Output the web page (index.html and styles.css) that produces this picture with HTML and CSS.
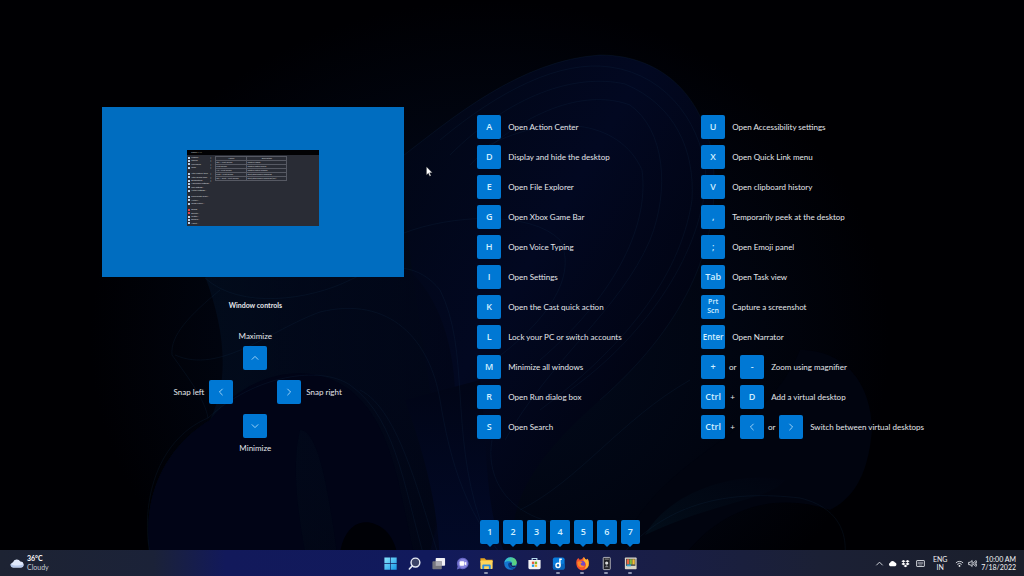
FILE: index.html
```html
<!DOCTYPE html>
<html lang="en">
<head>
<meta charset="utf-8">
<title>Windows key shortcuts</title>
<link rel="stylesheet" href="styles.css">
</head>
<body>
<svg class="wallpaper" viewBox="0 0 1024 576" preserveAspectRatio="xMidYMid slice" aria-hidden="true">
  <defs>
    <radialGradient id="glow" cx="50%" cy="50%" r="50%"><stop offset="0" stop-color="#020b1e"/><stop offset=".6" stop-color="#010511"/><stop offset="1" stop-color="#000003"/></radialGradient>
    <linearGradient id="petal" x1="0" y1="0" x2="1" y2="1"><stop offset="0" stop-color="#010614"/><stop offset=".4" stop-color="#020821"/><stop offset="1" stop-color="#000005"/></linearGradient>
    <linearGradient id="arm" x1="0" y1="0" x2="1" y2="0"><stop offset="0" stop-color="#031224"/><stop offset=".5" stop-color="#02091c"/><stop offset="1" stop-color="#010516"/></linearGradient>
    <linearGradient id="blue" x1="0" y1="0" x2="0" y2="1"><stop offset="0" stop-color="#010516"/><stop offset="1" stop-color="#020a2a"/></linearGradient>
    <linearGradient id="swoosh" x1="0" y1="1" x2="1" y2="0"><stop offset="0" stop-color="#020d19"/><stop offset="1" stop-color="#010410"/></linearGradient>
  </defs>
  <rect width="1024" height="576" fill="#000003"/>
  <ellipse cx="490" cy="340" rx="400" ry="340" fill="url(#glow)"/>
  <path d="M404 155C450 120 520 60 600 55C665 55 705 100 713 160C722 250 680 330 600 400C520 470 500 520 520 576H420C470 480 400 300 404 155Z" fill="url(#petal)"/>
  <path d="M205 276C225 330 230 380 210 420C160 450 135 510 155 576H420C460 480 480 330 404 265Z" fill="url(#arm)" opacity=".7"/>
  <path d="M210 420C250 370 310 360 350 390C400 430 400 510 420 576H340C330 500 320 430 300 430C290 470 300 530 310 576H155C135 510 160 450 210 420Z" fill="#010416"/>
  <path d="M405 400C430 470 440 520 440 576H520C480 530 490 450 480 380Z" fill="url(#blue)"/>
  <path d="M800 350C850 350 872 390 872 430C868 480 850 500 830 510C770 490 710 510 670 576H610C620 540 640 510 660 490C710 440 770 420 800 350Z" fill="#01040f"/>
  <path d="M645 535C670 490 740 470 785 480C770 500 720 500 645 535Z" fill="url(#swoosh)"/>
  <path d="M340 576C335 530 360 510 385 530C400 545 398 565 400 576Z" fill="#000106"/>
  <g class="wallpaper-folds">
    <path d="M404 155C450 120 520 60 600 55C665 55 705 100 713 160C722 250 680 330 600 400"/>
    <path d="M440 140C500 90 560 60 610 67C670 75 705 130 706 180C700 260 640 340 570 390"/>
    <path d="M450 155C510 95 575 73 625 84C675 105 695 150 692 200C680 280 620 350 540 410"/>
    <path d="M470 165C530 105 590 90 630 105C665 130 670 190 650 240C620 310 550 360 505 440"/>
    <path d="M480 150C550 110 620 120 642 170C650 230 610 300 540 360"/>
    <path d="M404 233C450 215 530 210 560 240C580 280 540 330 480 370"/>
    <path d="M205 278C240 310 310 300 350 280S420 265 440 290C470 350 450 430 480 520"/>
    <path d="M175 355C220 375 270 330 320 312C390 295 430 340 440 400C450 460 465 520 520 576"/>
    <path d="M220 290C190 315 170 335 172 355C190 380 205 400 208 418"/>
    <path d="M208 418C255 375 320 365 350 385C400 420 405 500 430 576"/>
    <path d="M208 418C155 440 135 510 155 576"/>
    <path d="M360 390C400 410 420 500 445 576"/>
    <path d="M492 440C485 480 510 520 570 525"/>
    <path d="M520 510C580 480 620 420 690 380"/>
    <path d="M610 570C660 500 730 490 800 498C850 510 850 550 840 576"/>
  </g>
</svg>

<main class="overlay">
  <section class="windows">
    <div class="preview">
      <div class="thumb">
        <div class="thumb-title">ShareX 14.1</div>
        <div class="thumb-body">
          <div class="thumb-menu">
            <ul class="four sub"><li>Capture</li><li>Upload</li><li>Workflows</li><li>Tools</li></ul>
            <ul class="six sub"><li>After capture tasks</li><li>After upload tasks</li><li>Destinations</li><li class="plain">Application settings...</li><li class="plain">Task settings...</li><li class="plain">Hotkey settings...</li></ul>
            <ul class="three"><li>Screenshots folder...</li><li>History...</li><li>Image history...</li></ul>
            <ul class="five"><li class="red">Debug</li><li class="red">Donate...</li><li>Twitter...</li><li>Discord...</li><li>About...</li></ul>
          </div>
          <table class="thumb-table">
            <tr><th>Hotkey</th><th>Description</th></tr>
            <tr><td>Ctrl + Print Screen</td><td>Capture region</td></tr>
            <tr><td>Print Screen</td><td>Capture entire screen</td></tr>
            <tr><td>Alt + Print Screen</td><td>Capture active window</td></tr>
            <tr><td>Shift + Print Screen</td><td>Start/Stop screen recording</td></tr>
            <tr><td>Ctrl + Shift + Print Screen</td><td>Start/Stop screen recording (GIF)</td></tr>
          </table>
        </div>
      </div>
    </div>
    <h2 class="controls-title">Window controls</h2>
    <div class="pad">
      <span class="pad-max">Maximize</span>
      <kbd class="key pad-up"><svg class="chev" viewBox="0 0 10 10"><path d="M1 7l4-4 4 4"/></svg></kbd>
      <span class="pad-snapl">Snap left</span>
      <kbd class="key pad-left"><svg class="chev" viewBox="0 0 10 10"><path d="M7 1L3 5l4 4"/></svg></kbd>
      <kbd class="key pad-right"><svg class="chev" viewBox="0 0 10 10"><path d="M3 1l4 4-4 4"/></svg></kbd>
      <span class="pad-snapr">Snap right</span>
      <kbd class="key pad-down"><svg class="chev" viewBox="0 0 10 10"><path d="M1 3l4 4 4-4"/></svg></kbd>
      <span class="pad-min">Minimize</span>
    </div>
  </section>

  <ul class="shortcuts">
    <li><kbd class="key">A</kbd><span class="what">Open Action Center</span></li>
    <li><kbd class="key">D</kbd><span class="what">Display and hide the desktop</span></li>
    <li><kbd class="key">E</kbd><span class="what">Open File Explorer</span></li>
    <li><kbd class="key">G</kbd><span class="what">Open Xbox Game Bar</span></li>
    <li><kbd class="key">H</kbd><span class="what">Open Voice Typing</span></li>
    <li><kbd class="key">I</kbd><span class="what">Open Settings</span></li>
    <li><kbd class="key">K</kbd><span class="what">Open the Cast quick action</span></li>
    <li><kbd class="key">L</kbd><span class="what">Lock your PC or switch accounts</span></li>
    <li><kbd class="key">M</kbd><span class="what">Minimize all windows</span></li>
    <li><kbd class="key">R</kbd><span class="what">Open Run dialog box</span></li>
    <li><kbd class="key">S</kbd><span class="what">Open Search</span></li>
  </ul>

  <ul class="shortcuts">
    <li><kbd class="key">U</kbd><span class="what">Open Accessibility settings</span></li>
    <li><kbd class="key">X</kbd><span class="what">Open Quick Link menu</span></li>
    <li><kbd class="key">V</kbd><span class="what">Open clipboard history</span></li>
    <li><kbd class="key">,</kbd><span class="what">Temporarily peek at the desktop</span></li>
    <li><kbd class="key">;</kbd><span class="what">Open Emoji panel</span></li>
    <li><kbd class="key">Tab</kbd><span class="what">Open Task view</span></li>
    <li><kbd class="key stacked">Prt<br>Scn</kbd><span class="what">Capture a screenshot</span></li>
    <li><kbd class="key small">Enter</kbd><span class="what">Open Narrator</span></li>
    <li><kbd class="key">+</kbd><span class="join">or</span><kbd class="key">-</kbd><span class="what">Zoom using magnifier</span></li>
    <li><kbd class="key">Ctrl</kbd><span class="join">+</span><kbd class="key">D</kbd><span class="what">Add a virtual desktop</span></li>
    <li><kbd class="key">Ctrl</kbd><span class="join">+</span><kbd class="key"><svg class="chev" viewBox="0 0 10 10"><path d="M7 1L3 5l4 4"/></svg></kbd><span class="join">or</span><kbd class="key"><svg class="chev" viewBox="0 0 10 10"><path d="M3 1l4 4-4 4"/></svg></kbd><span class="what">Switch between virtual desktops</span></li>
  </ul>
</main>

<div class="badges">
  <kbd class="badge">1</kbd><kbd class="badge">2</kbd><kbd class="badge">3</kbd><kbd class="badge">4</kbd><kbd class="badge">5</kbd><kbd class="badge">6</kbd><kbd class="badge">7</kbd>
</div>

<footer class="taskbar">
  <button class="weather">
    <svg class="cloud" viewBox="0 0 14 10"><path d="M3 9.500a2.700 2.700 0 0 1 0-5.300A4 4 0 0 1 10.300 3.500 3 3 0 0 1 11 9.500Z" fill="#dfe9fb"/><path d="M3 9.500a2.700 2.700 0 0 1-2.300-3.800C3 8 9 8 13.300 6.500A3 3 0 0 1 11 9.500Z" fill="#b5c8ea"/></svg>
    <span class="weather-text"><b>36°C</b><span>Cloudy</span></span>
  </button>

  <nav class="apps" aria-label="Taskbar">
    <button class="app" aria-label="Start"><svg viewBox="0 0 16 16"><defs><linearGradient id="win" x1="0" y1="0" x2="1" y2="1"><stop offset="0" stop-color="#8ae6fc"/><stop offset="1" stop-color="#1597e8"/></linearGradient></defs><path d="M1.500 1.500h6.200v6.200H1.500zM8.400 1.500h6.200v6.200H8.400zM1.500 8.400h6.200v6.200H1.500zM8.400 8.400h6.200v6.200H8.400z" fill="url(#win)"/></svg></button>
    <button class="app" aria-label="Search"><svg viewBox="0 0 16 16"><circle cx="9" cy="7" r="4.700" fill="#3c4468" stroke="#e6ebf5" stroke-width="1.500"/><path d="M5.600 10.500L2.500 13.800" stroke="#e6ebf5" stroke-width="1.700" stroke-linecap="round"/></svg></button>
    <button class="app" aria-label="Task view"><svg viewBox="0 0 16 16"><rect x="5" y="2" width="10" height="8.500" rx=".8" fill="#f1f1f6"/><rect x="1.500" y="5.500" width="10" height="8.500" rx=".8" fill="#77777f"/><path d="M5 5.500h6.500v5H5z" fill="#aaaab2"/></svg></button>
    <button class="app" aria-label="Chat"><svg viewBox="0 0 16 16"><path d="M8.200 1.800a6.200 6.200 0 1 1-3 11.600L2 14.300l.8-3.300A6.200 6.200 0 0 1 8.200 1.800Z" fill="#6767c4"/><circle cx="8.500" cy="8" r="4.800" fill="#8987df"/><rect x="5" y="5.700" width="4.800" height="4.600" rx="1" fill="#fff"/><path d="M10.200 7.300L12 6v4l-1.800-1.300z" fill="#fff"/></svg></button>
    <button class="app open" aria-label="File Explorer"><svg viewBox="0 0 16 16"><path d="M1.500 2.500h4.500l1.500 1.500h7v3h-13z" fill="#e8a41c"/><rect x="1.500" y="4.800" width="13" height="9" rx=".8" fill="#ffd45a"/><path d="M3.500 13.800V10a1 1 0 0 1 1-1h7a1 1 0 0 1 1 1v3.800h-2V11h-5v2.800z" fill="#2f8fe0"/></svg></button>
    <button class="app" aria-label="Edge"><svg viewBox="0 0 16 16"><defs><linearGradient id="edge" x1="0" y1="0" x2="1" y2="0"><stop offset="0" stop-color="#2cb5e9"/><stop offset="1" stop-color="#64d86b"/></linearGradient></defs><circle cx="8" cy="8" r="6.700" fill="#1576cf"/><path d="M1.300 7.500C2 3.500 5 1.300 8.200 1.300c4 0 6.500 3 6.500 5.800 0 2-1.500 3.400-3.500 3.400-1.500 0-2.300-.6-2-1.200.8-1.300.3-3.300-2-3.600C4.500 5.300 2 6 1.300 7.500Z" fill="url(#edge)"/><path d="M5.500 8.500c-.3 3 2 5.300 5.200 5.200 1.200-.1 2-.7 2.800-1.500-2 .6-5 .2-6-2.200-.3-.9-.1-2 .3-2.800-1-.1-2.100.3-2.300 1.300Z" fill="#0a3f91"/><path d="M7.700 7.200c-.7 1.500-.2 3.600 2 4.400 1.500.5 3 .3 4.200-.3l-1-1.200c-1.500.7-4 .3-3.700-.8.300-.7.300-1.700-.3-2.300z" fill="#14205d"/></svg></button>
    <button class="app" aria-label="Microsoft Store"><svg viewBox="0 0 16 16"><path d="M5.500 4.500V2.700h5v1.800" fill="none" stroke="#b9dcef" stroke-width="1.200"/><path d="M1.500 4.300h13v8.200a1.500 1.500 0 0 1-1.500 1.500H3a1.500 1.500 0 0 1-1.500-1.500z" fill="#f2f2f4"/><path d="M5.200 6h2.500v2.500H5.200z" fill="#e55b3c"/><path d="M8.300 6h2.500v2.500H8.300z" fill="#75b52a"/><path d="M5.200 9.100h2.500v2.500H5.200z" fill="#249ee4"/><path d="M8.300 9.100h2.500v2.500H8.300z" fill="#f6ba24"/></svg></button>
    <button class="app open" aria-label="Music player"><svg viewBox="0 0 16 16"><rect x="2" y="1.500" width="12.500" height="13" rx="2" fill="#087bdc"/><path d="M2 10v2.500a2 2 0 0 0 2 2h8.500a2 2 0 0 0 2-2V8z" fill="#0864bb"/><circle cx="7.500" cy="10" r="2.200" fill="none" stroke="#fff" stroke-width="1.500"/><path d="M9.500 10.200V3.500h2" fill="none" stroke="#fff" stroke-width="1.500"/></svg></button>
    <button class="app open" aria-label="Firefox"><svg viewBox="0 0 16 16"><path d="M2 4l1.500-2 1.500 2 2-.5L9.500 1l1.500 2.500 1.500.5 1-1c1 2 1.200 3.200 1.200 5A6.600 6.600 0 0 1 1.500 9C1.300 7 1.300 5.500 2 4Z" fill="#f4532f"/><path d="M9.500 1l1.500 2.500 1.500.5 1-1c1 2 1.200 3.200 1.200 5a6 6 0 0 1-5 6c3-3 2.500-7-.2-8.500-.7-1.200-.8-3 0-4.500Z" fill="#ffb52e"/><circle cx="7.700" cy="8.300" r="3.100" fill="#7148c7"/><path d="M2.500 6.500c2-1.500 4-.6 5.500.1L6 8c0 2 2 3 4.500 2-1.500 3-7 2.500-7.500-1z" fill="#ff8a25"/></svg></button>
    <button class="app open" aria-label="Phone"><svg viewBox="0 0 16 16"><rect x="4.500" y="1.500" width="7.500" height="13" rx=".8" fill="#202026" stroke="#b8b8bd"/><path d="M6 3.300h4.500" stroke="#999"/><circle cx="8.200" cy="7.500" r="1.700" fill="#d9d9d9"/><path d="M6 12l2.200-2.500 2.300 2.500z" fill="#808087"/></svg></button>
    <button class="app open" aria-label="PowerToys"><svg viewBox="0 0 16 16"><rect x="2" y="1.500" width="12.500" height="12.500" rx=".8" fill="#d9d4c6"/><path d="M3.200 3h10v7.500h-10z" fill="#43494e"/><path d="M4 3.500h2.500v5.500H4z" fill="#ed6540"/><path d="M7 3.500h2.500v5.500H7z" fill="#81b83c"/><path d="M10 3.500h2.500v5.500H10z" fill="#f2bc32"/><path d="M4 9h4.500v2H4z" fill="#36a3ce"/></svg></button>
  </nav>

  <div class="tray">
    <button class="tray-icon" aria-label="Show hidden icons"><svg viewBox="0 0 10 10"><path d="M1.500 7L5 3.500 8.500 7" class="line"/></svg></button>
    <button class="tray-icon" aria-label="OneDrive"><svg viewBox="0 0 10 10"><path d="M2.500 8a2 2 0 0 1-.2-3.800A3 3 0 0 1 7.800 4 2.100 2.100 0 0 1 8 8Z" fill="#fff"/></svg></button>
    <button class="tray-icon" aria-label="Dropbox"><svg viewBox="0 0 10 10"><path d="M2.700 1L5 2.500 2.700 4 .4 2.500zM7.300 1l2.300 1.500L7.300 4 5 2.500zM2.700 4L5 5.500 2.700 7 .4 5.500zM7.300 4l2.300 1.500L7.300 7 5 5.500zM5 6.300l2.200 1.500L5 9.200 2.800 7.800z" fill="#fff"/></svg></button>
    <button class="tray-icon keyboard" aria-label="Touch keyboard"><svg viewBox="0 0 10 10"><rect x=".7" y="1.700" width="8.600" height="6.600" rx=".5" class="line"/><path d="M2 3.700h6M2 5.200h6M3 6.700h4" class="line dots"/></svg></button>
    <button class="lang">ENG<br>IN</button>
    <button class="tray-icon" aria-label="Network"><svg viewBox="0 0 10 10"><path d="M1 4.300a5.700 5.700 0 0 1 8 0M2.500 6a3.600 3.600 0 0 1 5 0" class="line"/><circle cx="5" cy="7.700" r="1" fill="#fff"/></svg></button>
    <button class="tray-icon" aria-label="Volume"><svg viewBox="0 0 10 10"><path d="M.7 3.700h1.600L4.600 1.700v6.600L2.300 6.300H.7zM6 3.500a2.200 2.200 0 0 1 0 3M7.300 2.300a4 4 0 0 1 0 5.400M8.600 1.300a5.700 5.700 0 0 1 0 7.400" class="line"/></svg></button>
    <button class="clock">10:00 AM<br>7/18/2022</button>
  </div>
</footer>

<svg class="cursor" viewBox="0 0 8 12" aria-hidden="true"><path d="M.5.500v9.500l2.200-2 1.500 3.500 1.500-.7-1.500-3.300h3z" fill="#fff" stroke="#222" stroke-width=".4"/></svg>
</body>
</html>
```

FILE: styles.css
```css
* { box-sizing: border-box; }

body {
  margin: 0;
  min-height: 100vh;
  display: flex;
  flex-direction: column;
  background: #000003;
  color: #e4e6ea;
  font: 8px/10px Lato, "Open Sans", sans-serif;
}

ul { margin: 0; padding: 0; list-style: none; }

button {
  border: 0;
  padding: 0;
  background: none;
  color: inherit;
  font: inherit;
}

.wallpaper {
  position: absolute;
  inset: 0;
  z-index: -1;
  width: 100%;
  height: 100%;
}

.wallpaper-folds { fill: none; stroke: #12304e; stroke-opacity: .2; }

.overlay {
  flex: 1;
  display: grid;
  grid-template-columns: 302fr 151fr 323fr;
  column-gap: 73px;
  align-items: start;
  padding: 107px 0 0 10%;
  white-space: nowrap;
}

.preview {
  display: flex;
  align-items: center;
  justify-content: center;
  aspect-ratio: 16 / 9;
  padding-bottom: 8px;
  background: #006dc0;
}

.thumb {
  width: 132px;
  background: #292c35;
  color: #d5d7db;
  font-size: 2px;
  line-height: 3px;
}

.thumb-title { height: 5px; padding: 1px 0 0 4px; background: #020204; }
.thumb-body { display: flex; gap: 4px; height: 71px; }

.thumb-menu {
  display: flex;
  flex-direction: column;
  gap: 3px;
  width: 24px;
  padding: 1px 0 1px 1px;
}

.thumb-menu ul { display: flex; flex-direction: column; }
.thumb-menu li { flex: 1; display: flex; align-items: center; gap: 1px; min-height: 0; }
.thumb-menu li::before { content: ""; flex: none; width: 2px; height: 2px; background: #bcd4ee; }
.thumb-menu .red::before { background: #e0454c; }
.sub li::after { content: "›"; margin-left: auto; font-size: 4px; }
.sub .plain::after { content: none; }
.four { flex: 4; }
.six { flex: 6; }
.three { flex: 3; }
.five { flex: 5; }

.thumb-table { align-self: flex-start; width: 72px; margin-top: 1px; border-collapse: collapse; color: #d0d2d6; }
.thumb-table td, .thumb-table th { padding: 0; height: 4px; font-weight: 400; border: 1px solid #565963; }

.controls-title {
  margin: 23px 0 0;
  padding-left: 4px;
  font-size: 7px;
  line-height: 10px;
  font-weight: 700;
  text-align: center;
}

.pad {
  display: grid;
  grid-template-columns: 1fr 24px 34px 24px 1fr;
  grid-template-rows: 10px 24px 34px 24px 10px;
  grid-template-areas:
    ". max max max ."
    ". . up . ."
    "snapl left . right snapr"
    ". . down . ."
    ". min min min .";
  gap: 5px;
  align-items: center;
  margin-top: 21px;
  padding-left: 4px;
}

.pad-max { grid-area: max; text-align: center; }
.pad-min { grid-area: min; text-align: center; }
.pad-up { grid-area: up; justify-self: center; }
.pad-down { grid-area: down; justify-self: center; }
.pad-left { grid-area: left; }
.pad-right { grid-area: right; }
.pad-snapl { grid-area: snapl; text-align: right; }
.pad-snapr { grid-area: snapr; }

.key {
  flex: none;
  display: flex;
  align-items: center;
  justify-content: center;
  width: 24px;
  height: 24px;
  padding-bottom: 2px;
  border-radius: 2px;
  background: #0078d4;
  color: #d2efff;
  font: 600 9px/9px "Open Sans", "Noto Sans", sans-serif;
  text-align: center;
}

.key.small { font-size: 8px; }
.key.stacked { font-size: 7px; line-height: 9px; }
.chev { width: 8px; height: 8px; margin-top: 2px; fill: none; stroke: #c4e9ff; }

.shortcuts { display: grid; gap: 6px; padding-top: 8px; }
.shortcuts li { display: flex; align-items: center; }
.what { padding-left: 7px; }
.join { width: 15px; text-align: center; }

.badges {
  align-self: center;
  display: grid;
  grid-template-columns: repeat(7, 1fr);
  gap: 4px;
  width: 256px;
  padding: 0 0 6px 96px;
}

.badge {
  position: relative;
  height: 24px;
  border-radius: 2px;
  background: #0078d4;
  color: #d2efff;
  font: 600 9px/24px "Open Sans", "Noto Sans", sans-serif;
  text-align: center;
}

.badge::after {
  content: "";
  position: absolute;
  top: 100%;
  left: 50%;
  margin-left: -3px;
  border: 3px solid transparent;
  border-top-color: #0078d4;
  border-bottom: 0;
}

.taskbar {
  display: grid;
  grid-template-columns: 1fr auto 1fr;
  align-items: center;
  height: 26px;
  padding: 0 8px 0 10px;
  background: linear-gradient(90deg, #1d2333 0%, #1b2238 15%, #12195b 22%, #111a5c 42%, #181d4e 55%, #191e45 65%, #1b2035 80%, #1b1f2b 100%);
  font-size: 7px;
}

.weather { justify-self: start; display: flex; align-items: center; gap: 3px; text-align: left; }
.cloud { width: 14px; height: 10px; }
.weather-text { display: grid; line-height: 9px; color: #c5cad6; }
.weather-text b { color: #fff; }

.apps { display: flex; margin-right: 6px; }
.app { position: relative; display: grid; place-items: center; width: 24px; height: 26px; }
.app svg { width: 15px; height: 15px; }

.app.open::after {
  content: "";
  position: absolute;
  bottom: 2px;
  left: 10px;
  width: 4px;
  height: 2px;
  border-radius: 1px;
  background: #8e94b0;
}

.tray { justify-self: end; display: flex; align-items: center; gap: 4px; color: #f3f4f6; line-height: 8px; }
.tray-icon { display: grid; place-items: center; width: 9px; height: 20px; }
.tray-icon svg { width: 9px; height: 9px; }
.tray-icon .line { fill: none; stroke: #dfe2e8; }
.tray-icon .dots { stroke-width: .6; }
.keyboard { margin-left: 2px; }
.lang { width: 22px; text-align: center; }
.clock { text-align: right; }

.cursor { position: absolute; left: 426px; top: 166px; width: 7px; height: 11px; }
```
